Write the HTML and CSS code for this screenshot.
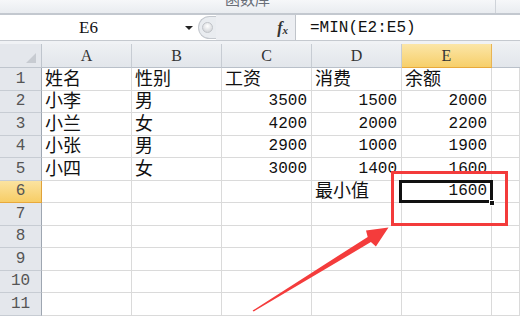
FILE: index.html
```html
<!DOCTYPE html>
<html lang="zh">
<head>
<meta charset="utf-8">
<title>Excel MIN</title>
<link rel="stylesheet" href="styles.css">
</head>
<body>
<div class="page">
  <div class="ribbon"><span class="group-label">函数库</span><span class="ribbon-div"></span></div>
  <div class="fbar">
    <div class="namebox"><span class="ref">E6</span><span class="drop"></span></div>
    <div class="splitter"><span class="knob"></span></div>
    <div class="fxarea"><span class="fx">f<sub>x</sub></span></div>
    <div class="finput">=MIN(E2:E5)</div>
  </div>
  <div class="spacer"></div>
  <div class="sheet">
    <div class="corner"><span class="tri"></span></div>
    <div class="ch">A</div><div class="ch">B</div><div class="ch">C</div><div class="ch">D</div><div class="ch sel">E</div><div class="ch last"></div>

    <div class="rh">1</div><div class="c t">姓名</div><div class="c t">性别</div><div class="c t">工资</div><div class="c t">消费</div><div class="c t">余额</div><div class="c"></div>
    <div class="rh">2</div><div class="c t">小李</div><div class="c t">男</div><div class="c n">3500</div><div class="c n">1500</div><div class="c n">2000</div><div class="c"></div>
    <div class="rh">3</div><div class="c t">小兰</div><div class="c t">女</div><div class="c n">4200</div><div class="c n">2000</div><div class="c n">2200</div><div class="c"></div>
    <div class="rh">4</div><div class="c t">小张</div><div class="c t">男</div><div class="c n">2900</div><div class="c n">1000</div><div class="c n">1900</div><div class="c"></div>
    <div class="rh">5</div><div class="c t">小四</div><div class="c t">女</div><div class="c n">3000</div><div class="c n">1400</div><div class="c n">1600</div><div class="c"></div>
    <div class="rh sel">6</div><div class="c"></div><div class="c"></div><div class="c"></div><div class="c t">最小值</div><div class="c n">1600</div><div class="c"></div>
    <div class="rh">7</div><div class="c"></div><div class="c"></div><div class="c"></div><div class="c"></div><div class="c"></div><div class="c"></div>
    <div class="rh">8</div><div class="c"></div><div class="c"></div><div class="c"></div><div class="c"></div><div class="c"></div><div class="c"></div>
    <div class="rh">9</div><div class="c"></div><div class="c"></div><div class="c"></div><div class="c"></div><div class="c"></div><div class="c"></div>
    <div class="rh">10</div><div class="c"></div><div class="c"></div><div class="c"></div><div class="c"></div><div class="c"></div><div class="c"></div>
    <div class="rh">11</div><div class="c"></div><div class="c"></div><div class="c"></div><div class="c"></div><div class="c"></div><div class="c"></div>

    <div class="selbox"><span class="handle"></span></div>
    <div class="redbox"></div>
  </div>
  <svg class="arrow" viewBox="0 0 520 317" width="520" height="317">
    <polygon points="252.6,310.6 367.7,236.9 366,230.4 388.5,227.5 375.9,246.6 370.9,242.1 253.6,311.6" fill="#f43c3c"/>
  </svg>
</div>
</body>
</html>
```
FILE: styles.css
```css
* { box-sizing: border-box; }
html, body { margin: 0; padding: 0; background: #fff; }
body { width: 520px; height: 317px; overflow: hidden; }
.page { position: relative; width: 520px; height: 317px; overflow: hidden; }

.ribbon {
  height: 15px;
  background: linear-gradient(#f6f7f9, #e9ecf0);
  border-bottom: 2px solid #c3c8cf;
  position: relative;
  display: flex;
  padding-left: 225px;
  overflow: hidden;
}
.group-label {
  font-family: "Noto Sans CJK SC", sans-serif;
  font-size: 15px;
  line-height: 15px;
  color: #6a6f78;
  margin-top: -9px;
}
.ribbon-div {
  position: absolute;
  left: 495px;
  top: 0;
  width: 1px;
  height: 13px;
  background: #cfd3d9;
}

.fbar {
  height: 26px;
  display: flex;
  border-bottom: 1px solid #c5c9cf;
}
.namebox {
  width: 198px;
  background: #fff;
  display: flex;
  align-items: center;
  position: relative;
}
.ref {
  font-family: "Liberation Serif", serif;
  font-size: 17px;
  color: #111;
  margin-left: 79px;
}
.drop {
  position: absolute;
  left: 185px;
  top: 11px;
  width: 0; height: 0;
  border-left: 4px solid transparent;
  border-right: 4px solid transparent;
  border-top: 4px solid #222;
}
.splitter {
  width: 18px;
  background: #e9ecf0;
  border-radius: 12px 0 0 12px;
  border: 1px solid #c4c8ce;
  border-right: none;
  display: flex;
  align-items: center;
  padding-left: 3px;
  margin: 1px 0;
}
.knob {
  width: 11px; height: 11px;
  border-radius: 50%;
  background: radial-gradient(circle at 50% 35%, #ffffff, #c9ccd1);
  border: 1px solid #c0c3c8;
}
.fxarea {
  width: 80px;
  background: #eceef2;
  border-right: 1px solid #c0c4ca;
  display: flex;
  align-items: center;
  justify-content: flex-end;
  padding-right: 7px;
}
.fx {
  font-family: "Liberation Serif", serif;
  font-style: italic;
  font-weight: bold;
  font-size: 16px;
  color: #333;
}
.fx sub { font-size: 11px; vertical-align: -1px; }
.finput {
  flex: 1;
  background: #fff;
  font-family: "Liberation Mono", monospace;
  font-size: 16px;
  color: #111;
  display: flex;
  align-items: center;
  padding-left: 14px;
}
.spacer {
  height: 3px;
  background: #f0f2f5;
}

.sheet {
  position: relative;
  display: grid;
  grid-template-columns: 42px 90px 90px 90px 90px 90px 1fr;
  grid-template-rows: 24px repeat(11, 22.5px);
}
.corner {
  background: #e4e7ec;
  border-right: 1px solid #bfc5cd;
  border-bottom: 1px solid #bfc5cd;
  position: relative;
}
.tri {
  position: absolute;
  right: 5px;
  bottom: 4px;
  width: 0; height: 0;
  border-left: 10px solid transparent;
  border-bottom: 10px solid #c7cbd1;
}
.ch {
  background: linear-gradient(#eef0f3, #e2e6eb);
  border-right: 1px solid #c7ccd3;
  border-bottom: 1px solid #b9c0c9;
  font-family: "Liberation Serif", serif;
  font-size: 16px;
  color: #333;
  display: flex;
  align-items: center;
  justify-content: center;
}
.ch.sel {
  background: linear-gradient(#fbe6a8, #f7cf6a);
  border-bottom: 1px solid #e8a93b;
  border-right: 1px solid #e8b454;
}
.ch.last { border-right: none; }
.rh {
  background: #e4e7ec;
  border-right: 1px solid #9ea6b1;
  border-bottom: 1px solid #c7ccd3;
  font-family: "Liberation Mono", monospace;
  font-size: 16px;
  color: #555;
  display: flex;
  align-items: center;
  justify-content: center;
}
.rh.sel {
  background: linear-gradient(#fbe3a0, #f7cd66);
  border-right: 1px solid #e0a23a;
  border-bottom: 1px solid #e8a93b;
}
.c {
  border-right: 1px solid #dadada;
  border-bottom: 1px solid #dadada;
  display: flex;
  align-items: center;
  font-family: "Liberation Mono", monospace;
  font-size: 16px;
  color: #111;
  white-space: nowrap;
  overflow: visible;
}
.c.t {
  font-family: "Liberation Sans", "Noto Sans CJK SC", sans-serif;
  font-size: 18px;
  padding-left: 3px;
  line-height: 1;
}
.c.n {
  justify-content: flex-end;
  padding-right: 4px;
}

.selbox {
  position: absolute;
  left: 399px;
  top: 136px;
  width: 94px;
  height: 23px;
  border: 3px solid #111;
}
.handle {
  position: absolute;
  right: -5px;
  bottom: -6px;
  width: 6px;
  height: 6px;
  background: #111;
  border: 1px solid #fff;
}
.redbox {
  position: absolute;
  left: 391px;
  top: 127px;
  width: 117px;
  height: 55px;
  border: 3px solid #f33b3b;
}
.arrow {
  position: absolute;
  left: 0;
  top: 0;
  pointer-events: none;
}
```
